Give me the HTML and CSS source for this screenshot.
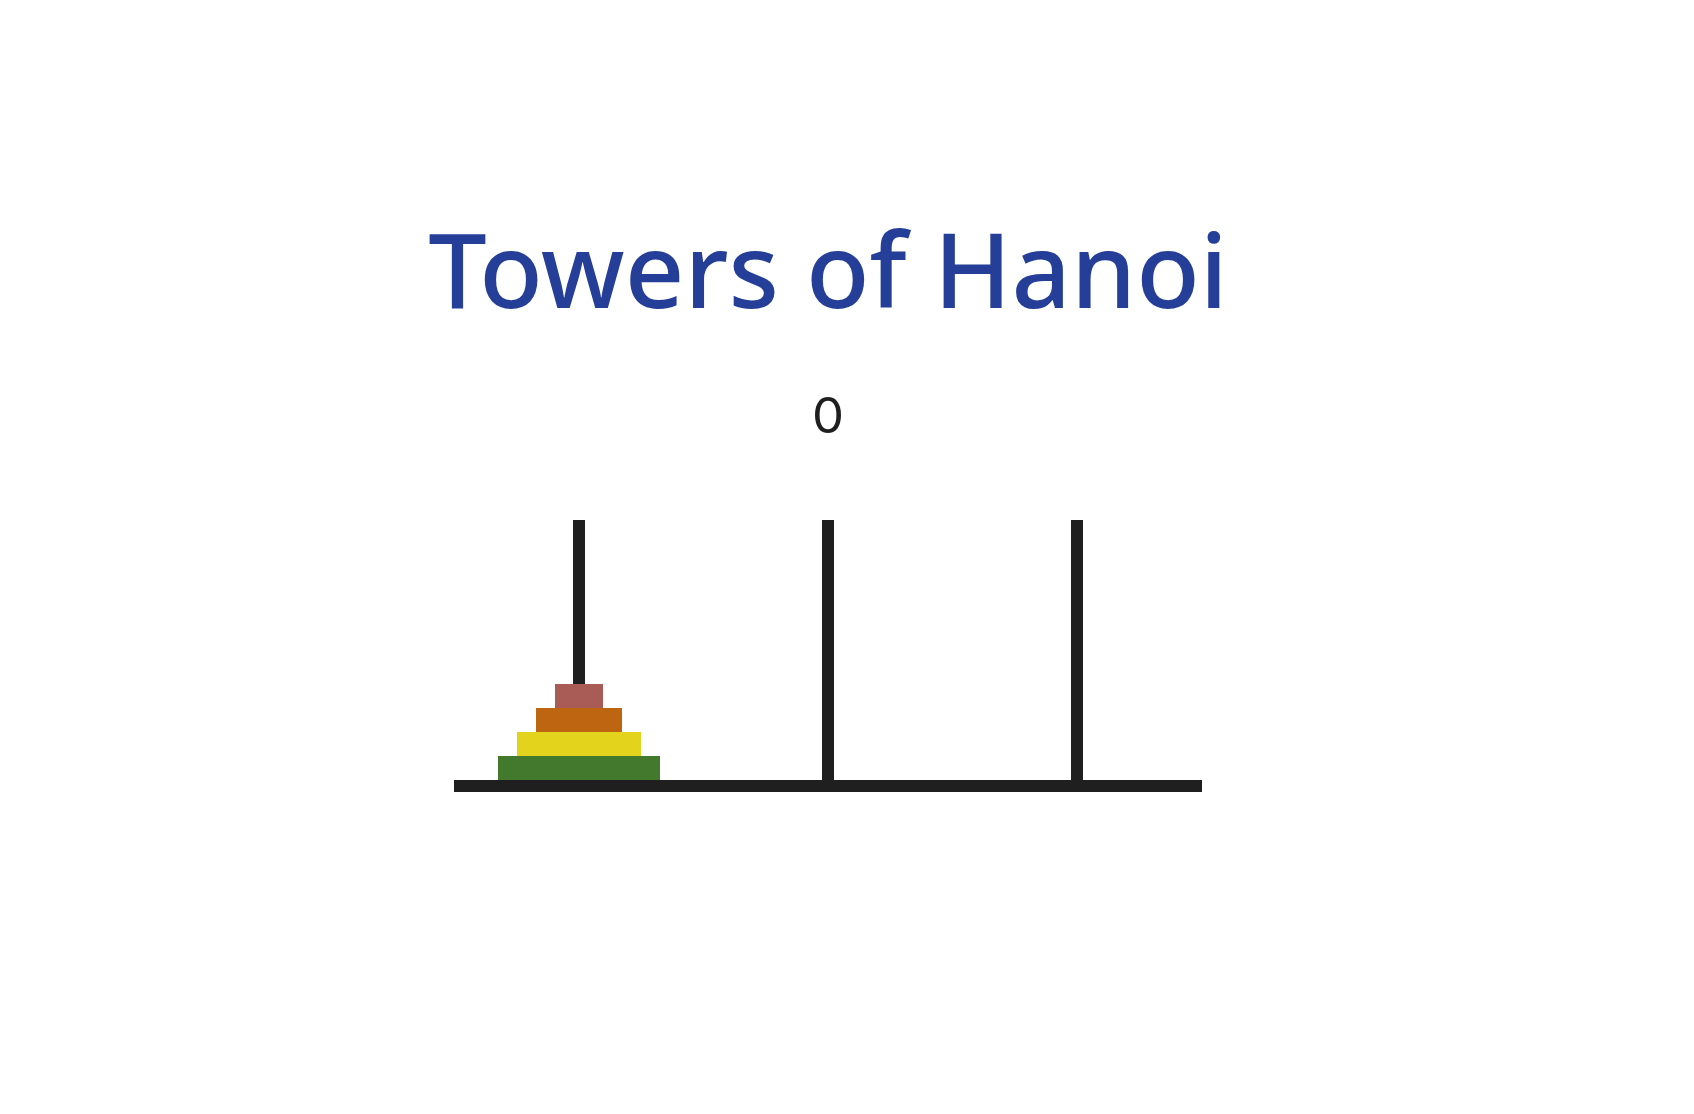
FILE: index.html
```html
<!DOCTYPE html>
<html lang="en">
<head>
<meta charset="utf-8">
<title>Towers of Hanoi</title>
<link rel="stylesheet" href="styles.css">
</head>
<body>
<main class="app">
  <h1 class="title">Towers of Hanoi</h1>
  <div class="moves">0</div>
  <section class="board">
    <div class="towers">
      <div class="tower">
        <div class="pole"></div>
        <div class="disk disk-1"></div>
        <div class="disk disk-2"></div>
        <div class="disk disk-3"></div>
        <div class="disk disk-4"></div>
      </div>
      <div class="tower">
        <div class="pole"></div>
      </div>
      <div class="tower">
        <div class="pole"></div>
      </div>
    </div>
    <div class="base"></div>
  </section>
</main>
</body>
</html>
```

FILE: styles.css
```css
html, body {
  margin: 0;
  padding: 0;
  background: #ffffff;
}

.app {
  width: 1656px;
  display: flex;
  flex-direction: column;
  align-items: center;
  padding-top: 216px;
  font-family: Lato, "Noto Sans", sans-serif;
}

.title {
  margin: 0;
  font-family: "Noto Sans", Lato, sans-serif;
  font-size: 104px;
  line-height: 1;
  font-weight: 500;
  color: #253f98;
}

.moves {
  margin-top: 69px;
  font-size: 50px;
  line-height: 1;
  color: #1f1f1f;
}

.board {
  margin-top: 81px;
  width: 748px;
  display: flex;
  flex-direction: column;
}

.towers {
  display: grid;
  grid-template-columns: repeat(3, 1fr);
  height: 260px;
}

.tower {
  position: relative;
  display: flex;
  flex-direction: column;
  align-items: center;
  justify-content: flex-end;
}

.pole {
  position: absolute;
  top: 0;
  bottom: 0;
  left: 50%;
  width: 12px;
  margin-left: -6px;
  background: #1f1f1f;
}

.disk {
  position: relative;
  height: 24px;
}

.disk-1 { width: 48px; background: #a95c56; }
.disk-2 { width: 86px; background: #bd6510; }
.disk-3 { width: 124px; background: #e3d31c; }
.disk-4 { width: 162px; background: #42792d; }

.base {
  height: 12px;
  background: #1f1f1f;
}
```
